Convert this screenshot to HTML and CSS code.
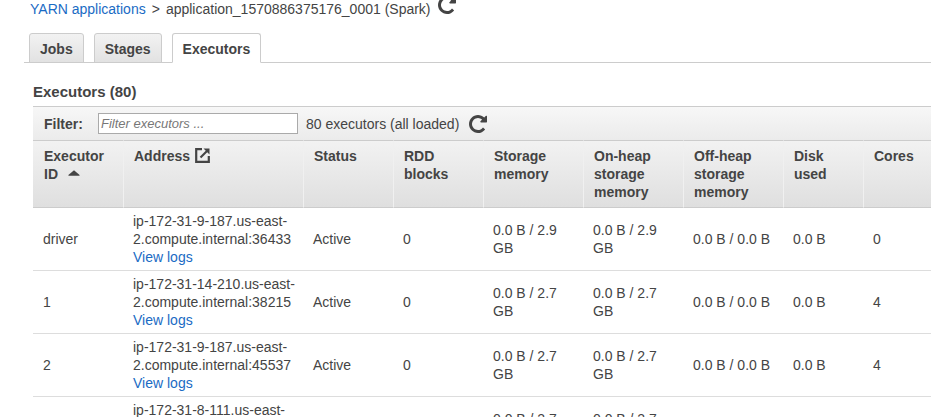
FILE: index.html
```html
<!DOCTYPE html>
<html lang="en">
<head>
<meta charset="utf-8">
<title>Executors</title>
<link rel="stylesheet" href="styles.css">
</head>
<body>
<nav class="crumbs">
  <a href="#">YARN applications</a>
  <span class="sep">&gt;</span>
  <span>application_1570886375176_0001 (Spark)</span>
  <svg class="reload reload-top" viewBox="128 128 1536 1536"><path d="M1664 256v448q0 26-19 45t-45 19h-448q-42 0-59-40-17-39 14-69l138-138q-148-137-349-137-104 0-198.5 40.5t-163.5 109.5-109.5 163.5-40.5 198.5 40.5 198.5 109.5 163.5 163.5 109.5 198.5 40.5q119 0 225-52t179-147q7-10 23-12 14 0 25 9l137 138q9 8 9.5 20.5t-7.5 22.5q-109 132-264 204.5t-327 72.5q-156 0-298-61t-245-164-164-245-61-298 61-298 164-245 245-164 298-61q147 0 284.5 55.5t244.5 156.5l130-129q29-31 70-14 39 17 39 59z"/></svg>
</nav>
<div class="tabs">
  <a class="tab" href="#">Jobs</a>
  <a class="tab" href="#">Stages</a>
  <a class="tab active" href="#">Executors</a>
</div>
<main class="content">
  <h2 class="title">Executors (80)</h2>
  <div class="filter-bar">
    <label class="filter-label" for="f">Filter:</label>
    <input id="f" class="filter-input" placeholder="Filter executors ...">
    <span>80 executors (all loaded)</span>
    <svg class="reload" viewBox="128 128 1536 1536"><path d="M1664 256v448q0 26-19 45t-45 19h-448q-42 0-59-40-17-39 14-69l138-138q-148-137-349-137-104 0-198.5 40.5t-163.5 109.5-109.5 163.5-40.5 198.5 40.5 198.5 109.5 163.5 163.5 109.5 198.5 40.5q119 0 225-52t179-147q7-10 23-12 14 0 25 9l137 138q9 8 9.5 20.5t-7.5 22.5q-109 132-264 204.5t-327 72.5q-156 0-298-61t-245-164-164-245-61-298 61-298 164-245 245-164 298-61q147 0 284.5 55.5t244.5 156.5l130-129q29-31 70-14 39 17 39 59z"/></svg>
  </div>
  <table class="grid">
    <colgroup>
      <col class="c90"><col class="c180"><col class="c90"><col class="c90"><col class="c100"><col class="c100"><col class="c100"><col class="c80"><col class="c80">
    </colgroup>
    <thead>
      <tr>
        <th>Executor ID <svg class="sort" viewBox="0 0 12 6"><path d="M6 0.3 L11.6 5 Q12 5.8 11 5.8 H1 Q0 5.8 0.4 5 Z"/></svg></th>
        <th>Address <svg class="ext" viewBox="0 0 15 15"><path class="ext-box" d="M7 1.2H1.2V13.8H13.8V8"/><path class="ext-arrow" d="M5.5 9.5 L12 3"/><path class="ext-head" d="M8.5 0.5H14.5V6.5Z"/></svg></th>
        <th>Status</th>
        <th>RDD blocks</th>
        <th>Storage memory</th>
        <th>On-heap storage memory</th>
        <th>Off-heap storage memory</th>
        <th>Disk used</th>
        <th>Cores</th>
      </tr>
    </thead>
    <tbody>
      <tr>
        <td>driver</td>
        <td>ip-172-31-9-187.us-east-2.compute.internal:36433<br><a href="#">View logs</a></td>
        <td>Active</td><td>0</td><td>0.0 B / 2.9 GB</td><td>0.0 B / 2.9 GB</td><td>0.0 B / 0.0 B</td><td>0.0 B</td><td>0</td>
      </tr>
      <tr>
        <td>1</td>
        <td>ip-172-31-14-210.us-east-2.compute.internal:38215<br><a href="#">View logs</a></td>
        <td>Active</td><td>0</td><td>0.0 B / 2.7 GB</td><td>0.0 B / 2.7 GB</td><td>0.0 B / 0.0 B</td><td>0.0 B</td><td>4</td>
      </tr>
      <tr>
        <td>2</td>
        <td>ip-172-31-9-187.us-east-2.compute.internal:45537<br><a href="#">View logs</a></td>
        <td>Active</td><td>0</td><td>0.0 B / 2.7 GB</td><td>0.0 B / 2.7 GB</td><td>0.0 B / 0.0 B</td><td>0.0 B</td><td>4</td>
      </tr>
      <tr>
        <td>3</td>
        <td>ip-172-31-8-111.us-east-2.compute.internal:40221<br><a href="#">View logs</a></td>
        <td>Active</td><td>0</td><td>0.0 B / 2.7 GB</td><td>0.0 B / 2.7 GB</td><td>0.0 B / 0.0 B</td><td>0.0 B</td><td>4</td>
      </tr>
    </tbody>
  </table>
</main>
</body>
</html>
```

FILE: styles.css
```css
* { box-sizing: border-box; }
html, body { height: 100%; }
body {
  margin: 0;
  overflow: hidden;
  font-family: "Liberation Sans", Arial, sans-serif;
  font-size: 14px;
  line-height: 18px;
  color: #444;
  background: #fff;
}
a { color: #1a6bc4; text-decoration: none; }

.crumbs {
  display: flex;
  height: 18px;
  padding-left: 30px;
  white-space: pre;
}
.sep { margin: 0 6px; }

.reload { width: 18px; height: 18px; fill: #444; flex: none; }
.reload-top { margin: -4px 0 0 7px; }

.tabs {
  display: flex;
  gap: 10px;
  height: 30px;
  margin: 15px 0 0 24px;
  padding-left: 5px;
  border-bottom: 1px solid #ccc;
}
.tab {
  height: 30px;
  padding: 6px 10px 0;
  border: 1px solid #ccc;
  border-radius: 3px 3px 0 0;
  background: linear-gradient(#f2f2f2, #e2e2e2);
  color: #444;
  font-weight: bold;
}
.tab.active {
  background: #fff;
  border-bottom-color: #fff;
}

.content { margin: 20px 0 0 33px; }
.title {
  margin: 0 0 5px;
  font-size: 15px;
  line-height: 18px;
  font-weight: bold;
}

.filter-bar {
  display: flex;
  align-items: center;
  width: 910px;
  height: 34px;
  padding-left: 11px;
  border-top: 1px solid #ccc;
  background: linear-gradient(#f7f7f7, #ebebeb);
}
.filter-label { font-weight: bold; width: 54px; }
.filter-input {
  width: 200px;
  height: 21px;
  margin-right: 8px;
  padding: 0 2px;
  border: 1px solid #aaa;
  border-radius: 0;
  background: #fff;
  font: 13px "Liberation Sans", Arial, sans-serif;
}
.filter-input::placeholder { color: #777; font-style: italic; opacity: 1; }
.filter-bar .reload { margin-left: 10px; }

.grid {
  width: 910px;
  table-layout: fixed;
  border-collapse: separate;
  border-spacing: 0;
}
.c90 { width: 90px; }
.c180 { width: 180px; }
.c100 { width: 100px; }
.c80 { width: 80px; }

.grid th {
  height: 68px;
  padding: 6px 8px 4px 10px;
  vertical-align: top;
  text-align: left;
  font-weight: bold;
  border-top: 1px solid #ccc;
  border-bottom: 1px solid #ccc;
  border-left: 1px solid #f0f0f0;
  background: linear-gradient(#f2f2f2, #dfdfdf);
}
.grid th:first-child { border-left: 0; padding-left: 11px; }
.grid td {
  height: 63px;
  padding: 4px 7px 4px 10px;
  vertical-align: middle;
  border-bottom: 1px solid #ddd;
}
.sort { width: 12px; height: 6px; margin-left: 6px; fill: #444; vertical-align: 3px; }
.ext { width: 15px; height: 15px; margin-left: 1px; vertical-align: -2px; }
.ext-box, .ext-arrow { fill: none; stroke: #444; stroke-width: 2.2; }
.ext-head { fill: #444; }
```
